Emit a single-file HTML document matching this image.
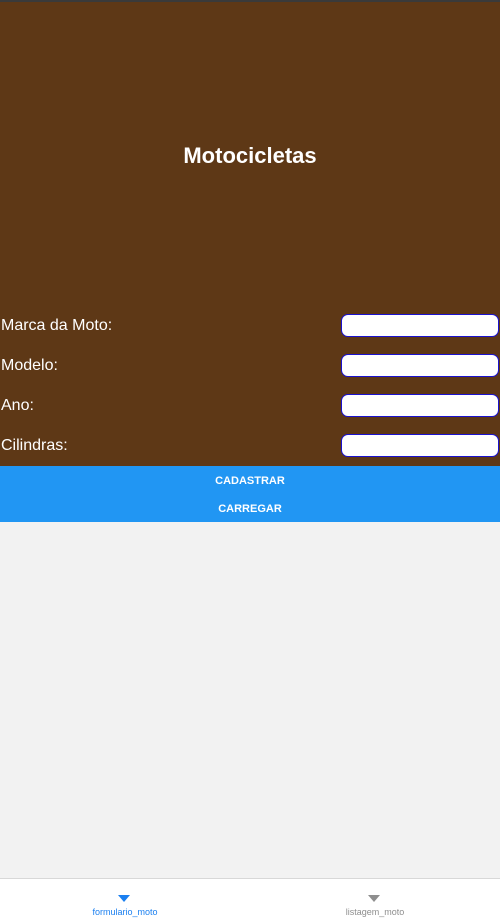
<!DOCTYPE html>
<html><head><style>
body{margin:0;width:500px;height:917px;overflow:hidden;background:#f2f2f2;font-family:"Liberation Sans",sans-serif;position:relative}
.top{position:absolute;left:0;top:0;width:500px;height:466px;background:#5e3816;border-top:2px solid #3a3a3a;box-sizing:border-box}
h1{position:absolute;top:141px;width:500px;text-align:center;margin:0;color:#fff;font-size:22px;font-weight:bold}
.lbl{position:absolute;left:1px;color:#fff;font-size:16px}
.in{position:absolute;left:341px;width:158px;height:23px;background:#fff;border:1px solid #1a12d0;border-radius:7px;box-sizing:border-box}
.btn{position:absolute;left:0;width:500px;height:28px;background:#2196f3;color:#fff;font-size:11px;font-weight:bold;text-align:center;line-height:31px}
.bar{position:absolute;left:0;top:878px;width:500px;height:39px;background:#fff;border-top:1px solid #d8d8d8}
.tri{position:absolute;top:16px;width:0;height:0;border-left:6px solid transparent;border-right:6px solid transparent;border-top:7px solid}
.t{position:absolute;top:28px;width:200px;text-align:center;font-size:9px}
</style></head><body>
<div class="top">
<h1>Motocicletas</h1>
<div class="lbl" style="top:315px">Marca da Moto:</div>
<div class="lbl" style="top:355px">Modelo:</div>
<div class="lbl" style="top:395px">Ano:</div>
<div class="lbl" style="top:435px">Cilindras:</div>
<div class="in" style="top:312px"></div>
<div class="in" style="top:352px"></div>
<div class="in" style="top:392px"></div>
<div class="in" style="top:432px"></div>
</div>
<div class="btn" style="top:466px">CADASTRAR</div>
<div class="btn" style="top:494px">CARREGAR</div>
<div class="bar">
<div class="tri" style="left:118px;border-top-color:#1a7ff0"></div>
<div class="tri" style="left:368px;border-top-color:#8e8e8e"></div>
<div class="t" style="left:25px;color:#1a7ff0">formulario_moto</div>
<div class="t" style="left:275px;color:#8e8e8e">listagem_moto</div>
</div>
</body></html>
